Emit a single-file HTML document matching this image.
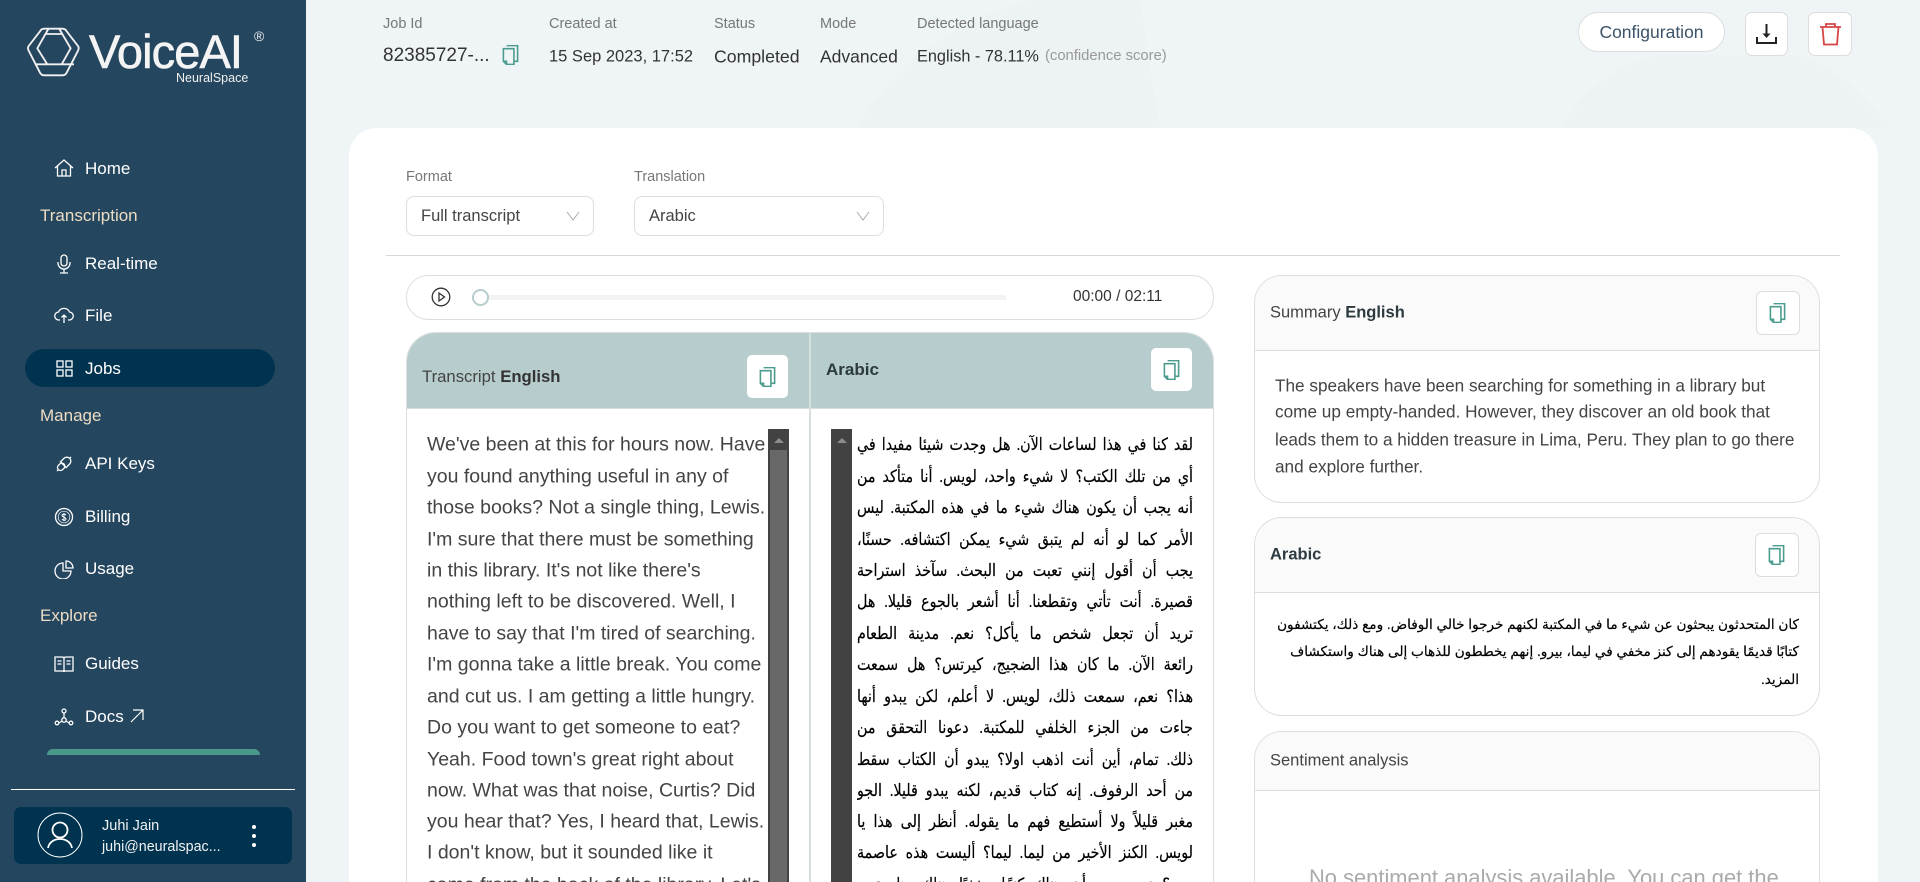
<!DOCTYPE html>
<html lang="en"><head><meta charset="utf-8"><title>VoiceAI Job</title>
<style>
*{box-sizing:border-box}
html,body{margin:0;padding:0;width:1920px;height:882px;overflow:hidden}
body{background:#eff4f7;font-family:"Liberation Sans",sans-serif;color:#333}
#root{position:absolute;left:0;top:0;width:1920px;height:882px;overflow:hidden;background:#eff4f7}
.a{position:absolute;white-space:nowrap}
#side{position:absolute;left:0;top:0;width:306px;height:882px;background:#25465f}
.nav{position:absolute;left:85px;color:#fff;font-size:17px;transform:translateY(-50%);white-space:nowrap}
.sec{position:absolute;left:40px;color:#ecdcc4;font-size:17px;transform:translateY(-50%);white-space:nowrap}
.ic{position:absolute;left:54px;width:20px;height:20px;fill:none;stroke:#fff;stroke-width:1.3}
.lbl{font-size:14.5px;color:#777;transform:translateY(-50%)}
.val{font-size:16.5px;color:#333;transform:translateY(-50%)}
#panel{position:absolute;left:349px;top:128px;width:1529px;height:754px;background:#fff;border-radius:28px 28px 0 0}
.sel{position:absolute;top:196px;height:40px;background:#fff;border:1px solid #ddd;border-radius:8px;font-size:16.5px;line-height:38px;padding-left:14px;color:#444}
.sel svg{position:absolute;top:13px;width:14px;height:12px;fill:none;stroke:#aaa;stroke-width:1}
.btn{position:absolute;background:#fff;border-radius:5px;display:block}
.copy{position:absolute;fill:none;stroke:#4c9b8f;stroke-width:1.5;width:17px;height:20px}
.card{position:absolute;left:1254px;width:566px;border:1px solid #ddd;border-radius:28px;background:#fff;overflow:hidden}
.card .hd{position:absolute;left:0;top:0;right:0;background:#fafafa;border-bottom:1px solid #ddd}
.ln{position:absolute;white-space:nowrap;transform:translateY(-50%);font-size:19.5px;color:#444;left:427px}
.ar{position:absolute;direction:rtl;unicode-bidi:isolate;white-space:normal;text-align:justify;text-align-last:justify;font-size:17px;color:#000;-webkit-text-stroke:.2px #000;font-family:"Liberation Serif","DejaVu Sans",serif;transform:translateY(-50%) scaleX(.84);transform-origin:right center;left:793px;width:400px;line-height:26px;height:26px;overflow:hidden}
.ar2{position:absolute;direction:rtl;text-align:right;font-size:13.6px;color:#000;-webkit-text-stroke:.2px #000;font-family:"Liberation Sans","DejaVu Sans",sans-serif;transform:translateY(-50%);white-space:nowrap;right:121px}
.s{font-size:17.2px;color:#444;position:absolute;left:1275px;white-space:nowrap;transform:translateY(-50%)}
</style></head><body><div id="root">

<svg class="a" style="left:860px;top:0" width="1060" height="130" viewBox="0 0 1060 130"><path d="M-4 128C30 70 90 20 170 0H280L300 128Z" fill="#edf2f5"/><path d="M703 128C720 90 760 62 800 55H940C980 70 1010 100 1030 128Z" fill="#edf2f5"/></svg>

<div id="side">
 <svg class="a" style="left:20px;top:20px" width="70" height="60" viewBox="0 0 210 180" fill="none" stroke="#f2f2f2" stroke-width="5.500" stroke-linejoin="round"><path d="M73 26H127Q136 26 140 34L174 78Q178 84 174 92L140 158Q136 166 127 166H73Q64 166 60 158L26 92Q22 84 26 78L60 34Q64 26 73 26Z"/><path d="M85 27L52 85 82 133M118 27L152 85 125 133M77 42H127M45 133H162"/></svg>
 <div class="a" style="left:89px;top:52px;transform:translateY(-50%);color:#f4f4f4;font-size:47px;letter-spacing:-.9px;line-height:50px;-webkit-text-stroke:.6px #f4f4f4">VoiceAI</div>
 <div class="a" style="left:176px;top:78px;transform:translateY(-50%);color:#f0f0f0;font-size:12.5px">NeuralSpace</div>
 <div class="a" style="left:254px;top:36px;transform:translateY(-50%);color:#f0f0f0;font-size:14px">®</div>

 <svg class="ic" style="top:158px;left:54px" viewBox="0 0 20 20"><path d="M1 10L10 2 19 10M3.500 8V18H16.500V8M8 18V12H12V18"/></svg>
 <div class="nav" style="top:169px">Home</div>
 <div class="sec" style="top:216px">Transcription</div>
 <svg class="ic" style="top:254px" viewBox="0 0 20 20"><rect x="7" y="1" width="6" height="11" rx="3"/><path d="M4 8V9A6 6 0 0 0 16 9V8M10 15V19M6 19H14"/></svg>
 <div class="nav" style="top:264px">Real-time</div>
 <svg class="ic" style="top:305px" viewBox="0 0 20 20"><path d="M6 15H5A4 4 0 0 1 4.500 7 6 6 0 0 1 15.500 7 4 4 0 0 1 15 15H14M10 18V10M7.500 12.500L10 10 12.500 12.500"/></svg>
 <div class="nav" style="top:316px">File</div>
 <div class="a" style="left:25px;top:349px;width:250px;height:38px;border-radius:19px;background:#00334f"></div>
 <svg class="ic" style="top:359px" viewBox="0 0 20 20"><rect x="3" y="2" width="6" height="6"/><rect x="12" y="2" width="6" height="6"/><rect x="3" y="11" width="6" height="6"/><rect x="12" y="11" width="6" height="6"/></svg>
 <div class="nav" style="top:369px">Jobs</div>
 <div class="sec" style="top:416px">Manage</div>
 <svg class="ic" style="top:454px" viewBox="0 0 20 20"><g transform="rotate(-45 10 10)"><rect x="2" y="7" width="8" height="6" rx="3"/><path d="M9 6H14A4 4 0 0 1 14 14H9ZM0 10H2M18 10H20"/></g></svg>
 <div class="nav" style="top:464px">API Keys</div>
 <svg class="ic" style="top:507px" viewBox="0 0 20 20"><circle cx="10" cy="10" r="8.500"/><circle cx="10" cy="10" r="5.800" stroke-width=".7"/><path d="M12 8C11 6.800 8 6.800 8 8.500S12 10.200 12 12 9 13.700 8 12M10 6V14" stroke-width="1"/></svg>
 <div class="nav" style="top:517px">Billing</div>
 <svg class="ic" style="top:559px" viewBox="0 0 20 20"><path d="M9 4A8 8 0 1 0 17 12H9ZM12 2V9H19A7 7 0 0 0 12 2Z"/></svg>
 <div class="nav" style="top:569px">Usage</div>
 <div class="sec" style="top:616px">Explore</div>
 <svg class="ic" style="top:654px" viewBox="0 0 20 20"><path d="M1 3H8Q10 3 10 5 10 3 12 3H19V17H12Q10 17 10 18 10 17 8 17H1ZM10 5V18M3.500 7H7.500M3.500 10H7.500M12.500 7H16.500M12.500 10H16.500"/></svg>
 <div class="nav" style="top:664px">Guides</div>
 <svg class="ic" style="top:707px" viewBox="0 0 20 20"><circle cx="10" cy="4" r="2"/><circle cx="3" cy="16" r="1.800"/><circle cx="17" cy="16" r="1.800"/><circle cx="10" cy="13" r="2.200"/><path d="M10 6V11M5 16L8 14M15 16L12 14"/></svg>
 <div class="nav" style="top:717px">Docs</div>
 <svg class="a" style="left:130px;top:709px" width="14" height="14" viewBox="0 0 14 14" fill="none" stroke="#fff" stroke-width="1.200"><path d="M1 13L13 1M3 1H13V11"/></svg>
 <div class="a" style="left:47px;top:749px;width:213px;height:6px;background:#4a9a8c;border-radius:14px 14px 0 0"></div>
 <div class="a" style="left:11px;top:789px;width:284px;height:1px;background:#fff"></div>
 <div class="a" style="left:14px;top:807px;width:278px;height:57px;background:#00334f;border-radius:7px"></div>
 <svg class="a" style="left:37px;top:812px" width="46" height="46" viewBox="0 0 46 46" fill="none" stroke="#fff"><circle cx="23" cy="23" r="22" stroke-width="1"/><circle cx="23" cy="18" r="7.500" stroke-width="1.800"/><path d="M11 36C13 24 33 24 35 36" stroke-width="1.800"/></svg>
 <div class="a" style="left:102px;top:826px;transform:translateY(-50%);color:#f2f2f2;font-size:14.500px">Juhi Jain</div>
 <div class="a" style="left:102px;top:847px;transform:translateY(-50%);color:#f2f2f2;font-size:14.300px">juhi@neuralspac...</div>
 <div class="a" style="left:252px;top:825px;width:4px;height:4px;border-radius:2px;background:#fff;box-shadow:0 9px 0 #fff,0 18px 0 #fff"></div>
</div>

<div class="a lbl" style="left:383px;top:24px">Job Id</div>
<div class="a lbl" style="left:549px;top:24px">Created at</div>
<div class="a lbl" style="left:714px;top:24px">Status</div>
<div class="a lbl" style="left:820px;top:24px">Mode</div>
<div class="a lbl" style="left:917px;top:24px">Detected language</div>
<div class="a val" style="left:383px;top:56px;font-size:19px">82385727-...</div>
<svg class="copy" style="left:502px;top:45px" viewBox="4.500 3.500 14.500 19"><path d="M5 7H15V22H8L5 19ZM8 4H18.500V19H15M5 19H8V22"/></svg>
<div class="a val" style="left:549px;top:57px">15 Sep 2023, 17:52</div>
<div class="a val" style="left:714px;top:57px;font-size:17.700px">Completed</div>
<div class="a val" style="left:820px;top:57px;font-size:17.500px">Advanced</div>
<div class="a val" style="left:917px;top:57px;font-size:16.300px">English - 78.11%</div>
<div class="a lbl" style="left:1045px;top:56px;font-size:14.800px;color:#999">(confidence score)</div>

<div class="a" style="left:1578px;top:12px;width:147px;height:40px;border-radius:20px;background:#fff;border:1px solid #ddd;text-align:center;line-height:38px;font-size:17.500px;color:#3b5368">Configuration</div>
<div class="a" style="left:1745px;top:12px;width:43px;height:44px;background:#fff;border:1px solid #ddd;border-radius:7px"></div>
<svg class="a" style="left:1755px;top:22px" width="23" height="24" viewBox="0 0 23 24" fill="none" stroke="#222" stroke-width="2"><path d="M2 15V21H21V15"/><path d="M11.500 2V15"/><path d="M7.500 11.500L11.500 16 15.500 11.500Z" fill="#222" stroke="none"/></svg>
<div class="a" style="left:1808px;top:12px;width:44px;height:44px;background:#fff;border:1px solid #ddd;border-radius:7px"></div>
<svg class="a" style="left:1819px;top:22px" width="23" height="24" viewBox="0 0 23 24" fill="none" stroke="#d64545" stroke-width="1.800"><path d="M1 5H22M7 5V2H16V5M3.500 5L5 22.500H18L19.500 5"/></svg>

<div id="panel"></div>

<div class="a lbl" style="left:406px;top:177px">Format</div>
<div class="a lbl" style="left:634px;top:177px">Translation</div>
<div class="sel" style="left:406px;width:188px">Full transcript<svg style="left:159px" viewBox="0 0 14 12"><path d="M1 2L7 10 13 2"/></svg></div>
<div class="sel" style="left:634px;width:250px">Arabic<svg style="left:221px" viewBox="0 0 14 12"><path d="M1 2L7 10 13 2"/></svg></div>
<div class="a" style="left:386px;top:255px;width:1454px;height:1px;background:#d8d8d8"></div>

<div class="a" style="left:406px;top:275px;width:808px;height:45px;border:1px solid #ddd;border-radius:22px;background:#fff"></div>
<svg class="a" style="left:431px;top:287px" width="20" height="20" viewBox="0 0 20 20" fill="none" stroke="#333" stroke-width="1.300"><circle cx="10" cy="10" r="8.800"/><path d="M8 6L13.500 10 8 14Z"/></svg>
<div class="a" style="left:480px;top:295px;width:526px;height:5px;background:#f3f3f3"></div>
<div class="a" style="left:472px;top:289px;width:17px;height:17px;border-radius:50%;background:#fff;border:2.500px solid #b7cccd"></div>
<div class="a val" style="left:1073px;top:297px;font-size:15.500px">00:00 / 02:11</div>

<div class="a" style="left:406px;top:332px;width:808px;height:550px;border:1px solid #ddd;border-bottom:0;border-radius:30px 30px 0 0;overflow:hidden;background:#fff"><div style="height:76px;background:#b7cccd;border-bottom:1px solid #d5dede"></div></div>
<div class="a" style="left:809px;top:332px;width:2px;height:550px;background:#d9dfdf"></div>
<div class="a val" style="left:422px;top:377px;font-size:16.700px;color:#444">Transcript <b style="color:#333;font-weight:700">English</b></div>
<div class="a val" style="left:826px;top:370px;font-size:17px;font-weight:700;color:#2d3a40">Arabic</div>
<div class="btn" style="left:747px;top:355px;width:41px;height:43px"></div>
<svg class="copy" style="left:759px;top:367px" viewBox="4.500 3.500 14.500 19"><path d="M5 7H15V22H8L5 19ZM8 4H18.500V19H15M5 19H8V22"/></svg>
<div class="btn" style="left:1151px;top:348px;width:41px;height:43px"></div>
<svg class="copy" style="left:1163px;top:360px" viewBox="4.500 3.500 14.500 19"><path d="M5 7H15V22H8L5 19ZM8 4H18.500V19H15M5 19H8V22"/></svg>

<div class="a" style="left:768px;top:429px;width:21px;height:453px;background:#424242"></div>
<div class="a" style="left:770px;top:450px;width:17px;height:432px;background:#686868"></div>
<div class="a" style="left:774px;top:438px;border-left:5px solid transparent;border-right:5px solid transparent;border-bottom:5px solid #8c8c8c"></div>
<div class="a" style="left:831px;top:429px;width:21px;height:453px;background:#424242"></div>
<div class="a" style="left:837px;top:438px;border-left:5px solid transparent;border-right:5px solid transparent;border-bottom:5px solid #8c8c8c"></div>

<div class="ln" style="top:445px">We've been at this for hours now. Have</div>
<div class="ln" style="top:477px">you found anything useful in any of</div>
<div class="ln" style="top:508px">those books? Not a single thing, Lewis.</div>
<div class="ln" style="top:540px">I'm sure that there must be something</div>
<div class="ln" style="top:571px">in this library. It's not like there's</div>
<div class="ln" style="top:602px">nothing left to be discovered. Well, I</div>
<div class="ln" style="top:634px">have to say that I'm tired of searching.</div>
<div class="ln" style="top:665px">I'm gonna take a little break. You come</div>
<div class="ln" style="top:697px">and cut us. I am getting a little hungry.</div>
<div class="ln" style="top:728px">Do you want to get someone to eat?</div>
<div class="ln" style="top:760px">Yeah. Food town's great right about</div>
<div class="ln" style="top:791px">now. What was that noise, Curtis? Did</div>
<div class="ln" style="top:822px">you hear that? Yes, I heard that, Lewis.</div>
<div class="ln" style="top:853px">I don't know, but it sounded like it</div>
<div class="ln" style="top:873px;height:9px;line-height:24px;overflow:hidden;transform:none">came from the back of the library. Let's</div>

<div class="ar" style="top:445px">لقد كنا في هذا لساعات الآن. هل وجدت شيئا مفيدا في</div>
<div class="ar" style="top:477px">أي من تلك الكتب؟ لا شيء واحد، لويس. أنا متأكد من</div>
<div class="ar" style="top:508px">أنه يجب أن يكون هناك شيء ما في هذه المكتبة. ليس</div>
<div class="ar" style="top:540px">الأمر كما لو أنه لم يتبق شيء يمكن اكتشافه. حسنًا،</div>
<div class="ar" style="top:571px">يجب أن أقول إنني تعبت من البحث. سآخذ استراحة</div>
<div class="ar" style="top:602px">قصيرة. أنت تأتي وتقطعنا. أنا أشعر بالجوع قليلا. هل</div>
<div class="ar" style="top:634px">تريد أن تجعل شخص ما يأكل؟ نعم. مدينة الطعام</div>
<div class="ar" style="top:665px">رائعة الآن. ما كان هذا الضجيج، كيرتس؟ هل سمعت</div>
<div class="ar" style="top:697px">هذا؟ نعم، سمعت ذلك، لويس. لا أعلم، لكن يبدو أنها</div>
<div class="ar" style="top:728px">جاءت من الجزء الخلفي للمكتبة. دعونا التحقق من</div>
<div class="ar" style="top:760px">ذلك. تمام، أين أنت اذهب اولا؟ يبدو أن الكتاب سقط</div>
<div class="ar" style="top:791px">من أحد الرفوف. إنه كتاب قديم، لكنه يبدو قليلا. الجو</div>
<div class="ar" style="top:822px">مغبر قليلاً ولا أستطيع فهم ما يقوله. أنظر إلى هذا يا</div>
<div class="ar" style="top:853px">لويس. الكنز الأخير من ليما. ليما؟ أليست هذه عاصمة</div>
<div class="ar" style="top:872px;height:10px;transform:scaleX(.84)">بيرو؟ نعم، يبدو أن هناك كنزًا مخفيًا هناك. هل تريد</div>

<div class="card" style="top:275px;height:228px"><div class="hd" style="height:75px"></div></div>
<div class="a val" style="left:1270px;top:313px;font-size:16.500px;color:#444">Summary <b style="color:#2d3a40">English</b></div>
<div class="a" style="left:1756px;top:291px;width:44px;height:44px;background:#fff;border:1px solid #ddd;border-radius:6px"></div>
<svg class="copy" style="left:1769px;top:303px" viewBox="4.500 3.500 14.500 19"><path d="M5 7H15V22H8L5 19ZM8 4H18.500V19H15M5 19H8V22"/></svg>
<div class="s" style="top:386px">The speakers have been searching for something in a library but</div>
<div class="s" style="top:412px">come up empty-handed. However, they discover an old book that</div>
<div class="s" style="top:440px">leads them to a hidden treasure in Lima, Peru. They plan to go there</div>
<div class="s" style="top:467px">and explore further.</div>

<div class="card" style="top:517px;height:199px"><div class="hd" style="height:75px"></div></div>
<div class="a val" style="left:1270px;top:555px;font-size:16.500px;font-weight:700;color:#2d3a40">Arabic</div>
<div class="a" style="left:1755px;top:533px;width:44px;height:44px;background:#fff;border:1px solid #ddd;border-radius:6px"></div>
<svg class="copy" style="left:1768px;top:545px" viewBox="4.500 3.500 14.500 19"><path d="M5 7H15V22H8L5 19ZM8 4H18.500V19H15M5 19H8V22"/></svg>
<div class="ar2" style="top:625px">كان المتحدثون يبحثون عن شيء ما في المكتبة لكنهم خرجوا خالي الوفاض. ومع ذلك، يكتشفون</div>
<div class="ar2" style="top:652px">كتابًا قديمًا يقودهم إلى كنز مخفي في ليما، بيرو. إنهم يخططون للذهاب إلى هناك واستكشاف</div>
<div class="ar2" style="top:680px">المزيد.</div>

<div class="card" style="top:731px;height:151px;border-bottom:0;border-radius:28px 28px 0 0"><div class="hd" style="height:59px"></div></div>
<div class="a val" style="left:1270px;top:761px;font-size:16.500px;color:#444">Sentiment analysis</div>
<div class="a" style="left:1309px;top:866px;height:16px;line-height:24px;overflow:hidden;font-size:21.900px;color:#aaa">No sentiment analysis available. You can get the</div>
</div></body></html>
